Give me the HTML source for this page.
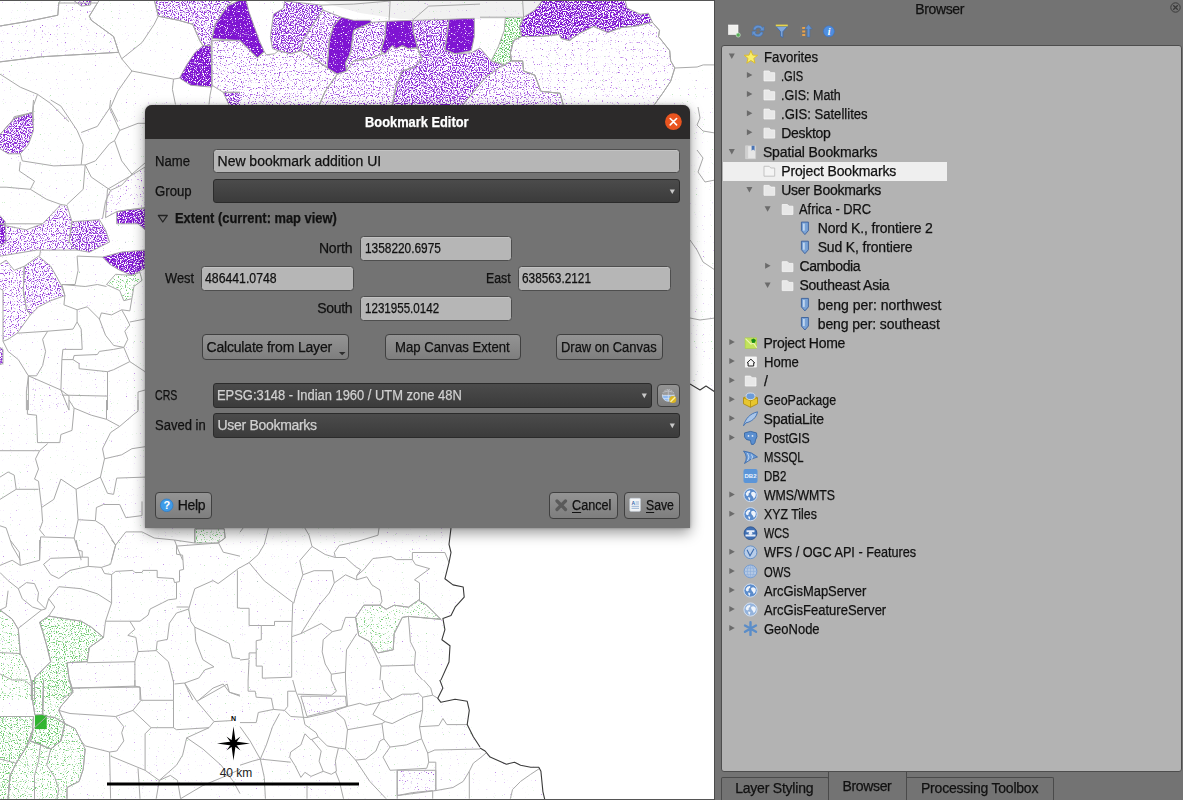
<!DOCTYPE html>
<html><head><meta charset="utf-8"><title>Bookmark Editor</title><style>
html,body{margin:0;padding:0}
body{width:1183px;height:800px;overflow:hidden;position:relative;background:#737373;font-family:"Liberation Sans", sans-serif;font-size:14px}
.t{position:absolute;white-space:nowrap;line-height:20px;height:20px;-webkit-text-stroke:0.25px currentColor}
.abs{position:absolute;box-sizing:border-box}
.inp{position:absolute;box-sizing:border-box;background:#b6b6b6;border:1px solid #4e4e4e;border-radius:3.5px;box-shadow:inset 0 1px 0 rgba(255,255,255,.18)}
.cmb{position:absolute;box-sizing:border-box;background:linear-gradient(#4b4b4b,#3b3b3b);border:1px solid #2b2b2b;border-radius:3px}
.btn{position:absolute;box-sizing:border-box;background:linear-gradient(#949494,#7e7e7e);border:1px solid #404040;border-radius:4px}
u{text-decoration:underline;text-underline-offset:2px}
</style></head><body>
<svg id="map" width="715" height="800" viewBox="0 0 715 800" style="position:absolute;left:0;top:0">
<defs>
<filter id="fp85" x="0" y="0" width="1" height="1" color-interpolation-filters="sRGB"><feTurbulence type="fractalNoise" baseFrequency="0.87" numOctaves="1" seed="1"/><feColorMatrix values="0 0 0 0 0.498 0 0 0 0 0.078 0 0 0 0 0.824 8 0 0 0 -2.810"/><feComposite in2="SourceGraphic" operator="in"/><feGaussianBlur stdDeviation="0.4"/></filter>
<filter id="fp90" x="0" y="0" width="1" height="1" color-interpolation-filters="sRGB"><feTurbulence type="fractalNoise" baseFrequency="0.87" numOctaves="1" seed="2"/><feColorMatrix values="0 0 0 0 0.498 0 0 0 0 0.078 0 0 0 0 0.824 8 0 0 0 -2.327"/><feComposite in2="SourceGraphic" operator="in"/><feGaussianBlur stdDeviation="0.4"/></filter>
<filter id="fp40" x="0" y="0" width="1" height="1" color-interpolation-filters="sRGB"><feTurbulence type="fractalNoise" baseFrequency="0.87" numOctaves="1" seed="3"/><feColorMatrix values="0 0 0 0 0.498 0 0 0 0 0.078 0 0 0 0 0.824 8 0 0 0 -3.969"/><feComposite in2="SourceGraphic" operator="in"/><feGaussianBlur stdDeviation="0.4"/></filter>
<filter id="fp4" x="0" y="0" width="1" height="1" color-interpolation-filters="sRGB"><feTurbulence type="fractalNoise" baseFrequency="0.87" numOctaves="1" seed="4"/><feColorMatrix values="0 0 0 0 0.498 0 0 0 0 0.078 0 0 0 0 0.824 8 0 0 0 -5.448"/><feComposite in2="SourceGraphic" operator="in"/><feGaussianBlur stdDeviation="0.4"/></filter>
<filter id="fp22" x="0" y="0" width="1" height="1" color-interpolation-filters="sRGB"><feTurbulence type="fractalNoise" baseFrequency="0.87" numOctaves="1" seed="5"/><feColorMatrix values="0 0 0 0 0.498 0 0 0 0 0.078 0 0 0 0 0.824 8 0 0 0 -4.591"/><feComposite in2="SourceGraphic" operator="in"/><feGaussianBlur stdDeviation="0.4"/></filter>
<filter id="fp55" x="0" y="0" width="1" height="1" color-interpolation-filters="sRGB"><feTurbulence type="fractalNoise" baseFrequency="0.87" numOctaves="1" seed="6"/><feColorMatrix values="0 0 0 0 0.498 0 0 0 0 0.078 0 0 0 0 0.824 8 0 0 0 -3.614"/><feComposite in2="SourceGraphic" operator="in"/><feGaussianBlur stdDeviation="0.4"/></filter>
<filter id="fp95" x="0" y="0" width="1" height="1" color-interpolation-filters="sRGB"><feTurbulence type="fractalNoise" baseFrequency="0.87" numOctaves="1" seed="7"/><feColorMatrix values="0 0 0 0 0.498 0 0 0 0 0.078 0 0 0 0 0.824 8 0 0 0 -2.145"/><feComposite in2="SourceGraphic" operator="in"/><feGaussianBlur stdDeviation="0.4"/></filter>
<filter id="fp28" x="0" y="0" width="1" height="1" color-interpolation-filters="sRGB"><feTurbulence type="fractalNoise" baseFrequency="0.87" numOctaves="1" seed="8"/><feColorMatrix values="0 0 0 0 0.498 0 0 0 0 0.078 0 0 0 0 0.824 8 0 0 0 -4.310"/><feComposite in2="SourceGraphic" operator="in"/><feGaussianBlur stdDeviation="0.4"/></filter>
<filter id="fp70" x="0" y="0" width="1" height="1" color-interpolation-filters="sRGB"><feTurbulence type="fractalNoise" baseFrequency="0.87" numOctaves="1" seed="9"/><feColorMatrix values="0 0 0 0 0.498 0 0 0 0 0.078 0 0 0 0 0.824 8 0 0 0 -3.355"/><feComposite in2="SourceGraphic" operator="in"/><feGaussianBlur stdDeviation="0.4"/></filter>
<filter id="fg40" x="0" y="0" width="1" height="1" color-interpolation-filters="sRGB"><feTurbulence type="fractalNoise" baseFrequency="0.87" numOctaves="1" seed="10"/><feColorMatrix values="0 0 0 0 0.235 0 0 0 0 0.725 0 0 0 0 0.235 8 0 0 0 -3.969"/><feComposite in2="SourceGraphic" operator="in"/><feGaussianBlur stdDeviation="0.4"/></filter>
<filter id="fp6" x="0" y="0" width="1" height="1" color-interpolation-filters="sRGB"><feTurbulence type="fractalNoise" baseFrequency="0.87" numOctaves="1" seed="11"/><feColorMatrix values="0 0 0 0 0.498 0 0 0 0 0.078 0 0 0 0 0.824 8 0 0 0 -5.183"/><feComposite in2="SourceGraphic" operator="in"/><feGaussianBlur stdDeviation="0.4"/></filter>
<filter id="fp35" x="0" y="0" width="1" height="1" color-interpolation-filters="sRGB"><feTurbulence type="fractalNoise" baseFrequency="0.87" numOctaves="1" seed="12"/><feColorMatrix values="0 0 0 0 0.498 0 0 0 0 0.078 0 0 0 0 0.824 8 0 0 0 -4.118"/><feComposite in2="SourceGraphic" operator="in"/><feGaussianBlur stdDeviation="0.4"/></filter>
<filter id="fp47" x="0" y="0" width="1" height="1" color-interpolation-filters="sRGB"><feTurbulence type="fractalNoise" baseFrequency="0.87" numOctaves="1" seed="13"/><feColorMatrix values="0 0 0 0 0.498 0 0 0 0 0.078 0 0 0 0 0.824 8 0 0 0 -3.685"/><feComposite in2="SourceGraphic" operator="in"/><feGaussianBlur stdDeviation="0.4"/></filter>
<filter id="fp80" x="0" y="0" width="1" height="1" color-interpolation-filters="sRGB"><feTurbulence type="fractalNoise" baseFrequency="0.87" numOctaves="1" seed="14"/><feColorMatrix values="0 0 0 0 0.498 0 0 0 0 0.078 0 0 0 0 0.824 8 0 0 0 -3.114"/><feComposite in2="SourceGraphic" operator="in"/><feGaussianBlur stdDeviation="0.4"/></filter>
<filter id="fp25" x="0" y="0" width="1" height="1" color-interpolation-filters="sRGB"><feTurbulence type="fractalNoise" baseFrequency="0.87" numOctaves="1" seed="15"/><feColorMatrix values="0 0 0 0 0.498 0 0 0 0 0.078 0 0 0 0 0.824 8 0 0 0 -4.409"/><feComposite in2="SourceGraphic" operator="in"/><feGaussianBlur stdDeviation="0.4"/></filter>
<filter id="fg20" x="0" y="0" width="1" height="1" color-interpolation-filters="sRGB"><feTurbulence type="fractalNoise" baseFrequency="0.87" numOctaves="1" seed="16"/><feColorMatrix values="0 0 0 0 0.235 0 0 0 0 0.725 0 0 0 0 0.235 8 0 0 0 -4.591"/><feComposite in2="SourceGraphic" operator="in"/><feGaussianBlur stdDeviation="0.4"/></filter>
<filter id="fg28" x="0" y="0" width="1" height="1" color-interpolation-filters="sRGB"><feTurbulence type="fractalNoise" baseFrequency="0.87" numOctaves="1" seed="17"/><feColorMatrix values="0 0 0 0 0.235 0 0 0 0 0.725 0 0 0 0 0.235 8 0 0 0 -4.278"/><feComposite in2="SourceGraphic" operator="in"/><feGaussianBlur stdDeviation="0.4"/></filter>
<filter id="fg15" x="0" y="0" width="1" height="1" color-interpolation-filters="sRGB"><feTurbulence type="fractalNoise" baseFrequency="0.87" numOctaves="1" seed="18"/><feColorMatrix values="0 0 0 0 0.235 0 0 0 0 0.725 0 0 0 0 0.235 8 0 0 0 -4.773"/><feComposite in2="SourceGraphic" operator="in"/><feGaussianBlur stdDeviation="0.4"/></filter>
<filter id="fg35" x="0" y="0" width="1" height="1" color-interpolation-filters="sRGB"><feTurbulence type="fractalNoise" baseFrequency="0.87" numOctaves="1" seed="19"/><feColorMatrix values="0 0 0 0 0.235 0 0 0 0 0.725 0 0 0 0 0.235 8 0 0 0 -4.118"/><feComposite in2="SourceGraphic" operator="in"/><feGaussianBlur stdDeviation="0.4"/></filter>
<filter id="fp8" x="0" y="0" width="1" height="1" color-interpolation-filters="sRGB"><feTurbulence type="fractalNoise" baseFrequency="0.87" numOctaves="1" seed="20"/><feColorMatrix values="0 0 0 0 0.498 0 0 0 0 0.078 0 0 0 0 0.824 8 0 0 0 -5.096"/><feComposite in2="SourceGraphic" operator="in"/><feGaussianBlur stdDeviation="0.4"/></filter>
<filter id="fp1" x="0" y="0" width="1" height="1" color-interpolation-filters="sRGB"><feTurbulence type="fractalNoise" baseFrequency="0.87" numOctaves="1" seed="21"/><feColorMatrix values="0 0 0 0 0.498 0 0 0 0 0.078 0 0 0 0 0.824 8 0 0 0 -5.667"/><feComposite in2="SourceGraphic" operator="in"/><feGaussianBlur stdDeviation="0.4"/></filter>
<filter id="fg1" x="0" y="0" width="1" height="1" color-interpolation-filters="sRGB"><feTurbulence type="fractalNoise" baseFrequency="0.87" numOctaves="1" seed="22"/><feColorMatrix values="0 0 0 0 0.235 0 0 0 0 0.725 0 0 0 0 0.235 8 0 0 0 -5.800"/><feComposite in2="SourceGraphic" operator="in"/><feGaussianBlur stdDeviation="0.4"/></filter>
</defs>
<rect width="715" height="800" fill="#fff"/>
<path d="M321 0 L335 6 L360 13 L400 19 L520 19 L535 10 L545 0 Z" fill="#f1f1f1"/>
<path d="M202.9 45.6 211.0 45.6 212.0 87.2 190.7 85.2 179.5 78.1 186.7 64.9 194.8 52.7Z" fill="#7f14d2" filter="url(#fp85)" opacity="1"/>
<path d="M240.0 0.0 227.2 6.1 215.1 24.3 212.0 38.5 240.0 40.6Z M240.0 0.0 246.1 0.0 249.1 12.2 259.3 40.6 264.3 51.7 257.2 57.8 252.2 52.7 240.0 40.6Z" fill="#7f14d2" filter="url(#fp90)" opacity="1"/>
<path d="M158.2 16.2 178.5 20.3 192.7 24.3 199.8 40.6 202.9 45.6 211.0 45.6 212.0 38.5 215.1 24.3 227.2 6.1 233.3 0.0 154.2 0.0Z M73.0 0.0 91.3 0.0 90.3 5.1 81.2 6.1Z M14.2 116.7 32.5 112.6 33.5 121.7 12.2 121.7Z M323.2 10.1 341.4 17.2 333.3 26.4 329.3 40.6 327.2 67.0 317.1 60.9 300.9 50.7 302.9 40.6 313.0 24.3Z M371.9 22.3 386.1 21.3 385.1 36.5 381.0 50.7 382.0 53.8 369.8 58.8 353.6 60.9 346.5 71.0 345.5 62.9 350.6 52.7 353.6 30.4Z" fill="#7f14d2" filter="url(#fp40)" opacity="0.85"/>
<path d="M0.0 26.0 28.4 21.3 57.8 15.2 58.8 3.0 97.4 3.0 89.3 16.2 91.3 20.3 113.6 36.5 118.7 52.3 40.6 56.8 0.0 61.9Z M28.4 375.8 60.9 390.0 69.0 410.1 28.4 410.1Z M300.9 696.2 345.5 696.2 346.5 706.4 307.0 716.5Z" fill="#7f14d2" filter="url(#fp4)" opacity="0.7"/>
<path d="M212.0 40.6 240.0 40.6 240.0 92.3 223.2 92.3 212.0 85.2Z M240.0 40.6 252.2 52.7 257.2 57.8 264.3 51.7 266.4 54.8 274.5 53.8 278.5 50.7 290.7 53.8 300.9 50.7 317.1 60.9 327.2 68.0 337.4 74.1 325.2 91.3 319.1 105.5 240.0 105.5Z" fill="#7f14d2" filter="url(#fp22)" opacity="0.72"/>
<path d="M223.2 92.3 240.0 92.3 240.0 105.5 229.3 105.5Z M284.6 1.0 321.2 5.1 323.2 10.1 313.0 24.3 302.9 40.6 300.9 50.7 290.7 53.8 278.5 50.7 272.5 48.7 270.4 36.5 273.5 14.2 283.6 8.1Z M14.2 118.3 32.5 112.2 33.5 130.4 28.4 144.6 20.3 153.8 8.1 153.8 0.0 148.7 0.0 134.5Z" fill="#7f14d2" filter="url(#fp55)" opacity="0.9"/>
<path d="M341.4 17.2 353.6 20.3 369.8 20.3 371.9 22.3 353.6 30.4 350.6 52.7 345.5 62.9 346.5 71.0 337.4 74.1 327.2 68.0 329.3 40.6 333.3 26.4Z M386.1 21.3 412.4 20.3 413.5 32.5 417.5 47.7 408.4 48.7 402.3 45.6 396.2 48.7 392.2 45.6 385.1 53.8 381.0 50.7 385.1 36.5Z M449.0 19.3 474.3 18.3 474.3 36.5 471.3 50.7 455.1 53.8 444.9 49.7 446.9 36.5Z" fill="#7f14d2" filter="url(#fp95)" opacity="1"/>
<path d="M337.4 74.1 346.5 71.0 353.6 60.9 369.8 58.8 382.0 53.8 385.1 53.8 392.2 45.6 396.2 48.7 402.3 45.6 408.4 48.7 417.5 47.7 421.6 58.8 414.5 67.0 402.3 71.0 396.2 85.2 392.2 105.5 319.1 105.5 325.2 91.3Z M501.5 66.1 504.3 64.9 511.4 60.9 522.6 60.9 523.6 71.0 534.8 75.1 540.9 91.3 560.1 93.3 563.2 105.5 462.0 105.5 464.8 102.5 476.0 89.0 485.0 77.8Z" fill="#7f14d2" filter="url(#fp28)" opacity="0.75"/>
<path d="M542.9 0.0 625.1 0.0 627.1 8.1 640.3 14.2 648.4 13.2 652.4 22.3 634.2 26.4 622.0 27.4 607.8 32.5 593.6 26.4 579.4 33.5 569.3 40.6 561.2 38.5 559.1 34.5 540.9 36.5 521.6 36.5 519.6 26.4 523.6 17.2 534.8 10.1Z M0.0 215.6 5.1 221.7 6.1 242.0 0.0 246.1Z" fill="#7f14d2" filter="url(#fp70)" opacity="1"/>
<path d="M505.4 17.2 523.6 17.2 519.6 26.4 521.6 36.5 513.5 40.6 510.4 52.7 511.4 60.9 504.3 64.9 491.2 60.9 498.3 46.7 504.3 30.4Z" fill="#3cb93c" filter="url(#fg40)" opacity="0.85"/>
<path d="M521.6 36.5 540.9 36.5 559.1 34.5 561.2 38.5 569.3 40.6 579.4 33.5 593.6 26.4 607.8 32.5 622.0 27.4 634.2 26.4 652.4 22.3 659.5 30.4 658.5 36.5 669.7 50.7 670.7 60.9 674.8 68.0 670.7 81.2 662.6 93.3 654.5 104.5 563.2 104.5 560.1 93.3 540.9 91.3 534.8 75.1 523.6 71.0 522.6 60.9 511.4 60.9 510.4 52.7 513.5 40.6Z M107.5 189.3 131.9 175.1 145.1 167.0 145.1 207.5 129.8 209.6 116.7 211.6 105.5 217.7Z" fill="#7f14d2" filter="url(#fp6)" opacity="0.7"/>
<path d="M0.0 223.8 6.1 225.8 26.4 229.8 42.6 223.8 60.9 204.5 67.0 205.5 72.0 221.7 69.0 242.0 77.1 250.1 36.5 250.1 0.0 256.2Z M24.3 266.2 38.5 256.1 50.7 266.2 60.9 284.5 64.9 295.6 50.7 300.7 38.5 306.8 30.4 314.9 26.4 308.8 23.3 290.6Z" fill="#7f14d2" filter="url(#fp35)" opacity="0.8"/>
<path d="M72.0 221.7 99.4 219.7 105.5 229.8 109.6 242.0 89.3 252.2 77.1 250.1 69.0 242.0Z M0.0 347.4 3.0 349.4 3.0 363.6 0.0 364.6Z M412.4 20.3 449.0 19.3 446.9 36.5 444.9 49.7 455.1 53.8 471.3 52.7 480.0 48.0 491.2 60.9 504.3 64.9 501.5 66.1 485.0 77.8 476.0 89.0 464.8 102.5 462.0 105.5 392.2 105.5 396.2 85.2 402.3 71.0 414.5 67.0 421.6 58.8 417.5 47.7 413.5 32.5Z" fill="#7f14d2" filter="url(#fp47)" opacity="0.9"/>
<path d="M116.7 211.6 129.8 209.6 145.1 208.5 145.1 229.8 138.0 223.8 116.7 223.8Z M102.5 257.1 121.7 252.0 145.1 250.0 145.1 268.3 131.9 275.4 119.7 270.3 109.6 264.2Z" fill="#7f14d2" filter="url(#fp80)" opacity="1"/>
<path d="M0.0 264.2 6.1 260.1 14.2 270.3 24.3 266.2 23.3 290.6 26.4 308.8 30.4 314.9 17.2 333.2 8.1 339.3 3.0 341.3 3.0 290.6 0.0 288.5Z" fill="#7f14d2" filter="url(#fp25)" opacity="0.75"/>
<path d="M106.5 284.5 115.6 274.3 131.9 275.4 140.0 272.3 142.0 280.4 133.9 286.5 131.9 298.7 123.8 300.7 119.7 290.6Z M194.8 528.8 224.2 528.8 225.2 538.0 218.1 543.0 194.8 543.0Z M16.2 763.2 26.4 747.0 30.4 740.9 40.6 744.9 50.7 749.0 60.9 740.9 64.9 723.6 75.1 728.7 81.2 740.9 85.2 749.0 83.2 769.3 79.1 781.4 67.0 787.5 67.0 798.7 8.1 798.7 10.1 775.4Z" fill="#3cb93c" filter="url(#fg20)" opacity="0.7"/>
<path d="M39.6 622.2 48.7 616.1 81.2 621.2 91.3 627.2 103.5 637.4 89.3 647.5 87.2 661.7 67.0 662.7 69.0 678.0 73.0 691.1 60.9 700.1 34.5 700.1 34.5 678.0 50.7 661.7 46.7 645.5 42.6 631.3Z M0.0 716.5 33.5 716.5 32.5 730.7 26.4 747.0 16.2 763.2 10.1 775.4 8.1 798.7 0.0 798.7Z M32.5 680.0 43.6 680.0 42.6 714.5 34.9 714.9 32.5 700.3Z" fill="#3cb93c" filter="url(#fg28)" opacity="0.75"/>
<path d="M0.0 610.0 12.2 619.1 18.3 629.3 20.3 653.6 28.4 669.8 31.4 682.0 31.4 700.1 0.0 700.1Z M43.6 680.0 69.0 680.0 73.0 692.2 60.9 706.4 58.8 710.4 64.9 723.6 54.8 717.5 46.7 716.5 42.6 714.5Z M363.8 605.2 380.0 605.2 386.1 609.3 394.2 605.2 408.4 607.2 418.5 600.1 426.7 605.2 440.9 619.4 408.4 616.4 402.3 617.4 394.2 633.6 393.2 649.8 378.0 652.9 369.8 641.7 358.7 635.6 355.6 617.4Z" fill="#3cb93c" filter="url(#fg15)" opacity="0.7"/>
<path d="M34.9 714.9 46.7 714.9 46.7 729.1 34.9 729.1Z" fill="#2fb52f"/>
<path d="M46.7 716.5 54.8 717.5 64.9 723.6 60.9 740.9 50.7 749.0 40.6 744.9 30.4 740.9 33.5 728.7Z" fill="#3cb93c" filter="url(#fg35)" opacity="0.8"/>
<path d="M397.2 770.3 435.8 770.3 435.8 790.6 397.2 795.6Z" fill="#7f14d2" filter="url(#fp8)" opacity="0.7"/>
<path d="M0.0 0.0 625.0 0.0 627.0 8.0 640.0 14.0 648.0 13.0 652.0 22.0 660.0 30.0 658.0 37.0 670.0 51.0 671.0 61.0 675.0 68.0 715.0 65.0 715.0 392.0 690.0 386.0 690.0 105.0 145.0 105.0 145.0 528.0 450.0 528.0 452.0 560.0 445.0 580.0 465.0 600.0 450.0 620.0 445.0 660.0 452.0 680.0 440.0 700.0 470.0 710.0 480.0 748.0 540.0 768.0 545.0 800.0 0.0 800.0Z" fill="#7f14d2" filter="url(#fp1)" opacity="0.5"/>
<path d="M0.0 0.0 625.0 0.0 627.0 8.0 640.0 14.0 648.0 13.0 652.0 22.0 660.0 30.0 658.0 37.0 670.0 51.0 671.0 61.0 675.0 68.0 715.0 65.0 715.0 392.0 690.0 386.0 690.0 105.0 145.0 105.0 145.0 528.0 450.0 528.0 452.0 560.0 445.0 580.0 465.0 600.0 450.0 620.0 445.0 660.0 452.0 680.0 440.0 700.0 470.0 710.0 480.0 748.0 540.0 768.0 545.0 800.0 0.0 800.0Z" fill="#3cb93c" filter="url(#fg1)" opacity="0.45"/>
<path d="M0.0 26.0 28.4 21.3 57.8 15.2 58.8 3.0 60.9 0.0 M0.0 61.9 40.6 56.8 118.7 52.3 M118.7 52.3 113.6 36.5 91.3 20.3 89.3 16.2 97.4 3.0 99.4 0.0 M118.7 52.3 121.7 58.8 131.9 71.0 173.5 79.1 179.5 78.1 M121.7 58.8 142.0 42.6 154.2 24.3 158.2 16.2 156.2 6.1 154.2 0.0 M131.9 71.0 117.7 91.3 110.6 107.5 117.7 121.7 M0.0 74.1 20.3 87.2 37.5 94.3 50.7 103.5 69.0 121.7 M37.5 94.3 33.5 105.5 32.5 121.7 M173.5 79.1 172.4 89.3 175.5 104.5 M158.2 16.2 178.5 20.3 192.7 24.3 199.8 40.6 202.9 45.6 M212.0 85.2 210.0 95.4 209.0 104.5 M33.5 100.0 32.5 112.2 14.2 118.3 0.0 134.5 M50.7 100.0 60.9 106.1 77.1 130.4 83.2 144.6 81.2 164.9 M20.3 153.8 22.3 160.9 53.8 165.9 81.2 164.9 85.2 164.9 M110.6 100.0 109.6 108.1 101.4 120.3 97.4 126.4 81.2 132.5 M109.6 108.1 119.7 130.4 114.6 140.6 109.6 143.6 95.4 160.9 85.2 164.9 M119.7 130.4 138.0 123.3 145.1 123.3 M114.6 140.6 121.7 160.9 131.9 174.1 145.1 162.9 M85.2 164.9 91.3 177.1 110.6 190.3 121.7 185.2 131.9 174.1 M110.6 190.3 105.5 201.4 102.5 218.7 M85.2 164.9 83.2 189.3 67.0 204.5 M20.3 161.9 19.3 171.0 34.5 181.2 30.4 189.3 46.7 199.4 60.9 204.5 M0.0 187.2 6.1 187.2 30.4 189.3 M0.0 223.8 42.6 223.8 M40.6 250.0 39.6 256.1 M77.1 256.1 78.1 270.3 75.1 284.5 61.9 284.5 M77.1 256.1 102.5 257.1 M61.9 284.5 85.2 286.5 97.4 284.5 106.5 286.5 M61.9 284.5 64.9 295.6 63.9 304.8 77.1 309.8 77.1 322.0 73.0 329.1 47.7 331.2 17.2 333.2 M77.1 309.8 87.2 306.8 99.4 319.0 101.4 312.9 111.6 314.9 121.7 309.8 129.8 310.9 131.9 298.7 M99.4 319.0 105.5 335.2 113.6 345.4 123.8 347.4 127.8 339.3 124.8 331.2 129.8 325.1 125.8 317.0 121.7 309.8 M129.8 322.0 145.1 319.0 M77.1 322.0 81.2 329.1 82.2 349.4 62.9 349.4 61.9 359.6 60.9 390.0 M47.7 331.2 42.6 339.3 45.6 351.4 42.6 365.6 36.5 375.8 28.4 375.8 M3.0 341.3 8.1 351.4 18.3 359.6 28.4 375.8 26.4 392.0 26.4 410.1 M61.9 359.6 73.0 359.6 74.1 355.5 97.4 354.5 99.4 351.4 113.6 349.4 123.8 347.4 M73.0 359.6 79.1 363.6 79.1 368.7 107.5 371.7 107.5 396.1 61.9 395.1 M107.5 371.7 113.6 369.7 129.8 361.6 123.8 347.4 M129.8 361.6 145.1 371.7 M107.5 396.1 107.5 410.1 M60.9 390.0 69.0 396.1 69.0 410.1 M138.0 410.1 138.0 392.0 145.1 390.0 M27.4 400.0 27.4 414.2 36.5 415.2 37.5 442.6 59.8 442.6 60.9 434.5 72.0 430.4 74.1 408.1 69.0 400.0 M74.1 408.1 91.3 415.2 106.5 419.3 119.7 426.4 133.9 414.2 138.0 411.2 138.0 400.0 M106.5 400.0 106.5 419.3 M119.7 426.4 110.6 432.5 102.5 448.7 104.5 458.8 100.4 477.1 76.1 489.3 60.9 479.1 53.8 499.4 41.6 507.5 38.5 481.2 34.5 479.1 38.5 469.0 35.5 458.8 39.6 450.7 47.7 443.6 M0.0 450.7 39.6 450.7 M104.5 458.8 121.7 454.8 131.9 448.7 145.1 446.7 M100.4 477.1 107.5 493.3 113.6 494.3 116.7 478.1 145.1 477.1 M76.1 489.3 78.1 519.7 74.1 538.0 40.6 536.9 39.6 560.1 M78.1 519.7 95.4 520.7 96.4 507.5 103.5 504.5 119.7 504.5 125.8 517.7 142.0 515.6 142.0 501.4 M95.4 520.7 103.5 525.8 115.6 545.1 111.6 560.1 M115.6 545.1 125.8 531.9 142.0 531.9 154.2 538.0 174.5 540.0 194.8 543.0 194.8 529.8 M0.0 499.4 16.2 489.3 14.2 475.1 8.1 472.0 0.0 477.1 M16.2 489.3 38.5 489.3 M41.6 507.5 42.6 521.7 39.6 529.8 44.6 535.9 M0.0 525.8 6.1 527.8 12.2 546.1 20.3 560.1 M74.1 538.0 79.1 552.2 81.2 560.1 M174.5 540.0 177.5 548.1 182.6 560.1 M218.1 542.0 223.2 552.2 240.0 556.2 M194.8 528.8 224.2 528.8 225.2 538.0 218.1 543.0 M0.0 565.4 12.2 560.3 20.3 565.4 39.6 560.3 39.6 540.0 M10.1 540.0 19.3 552.2 20.3 565.4 M76.1 540.0 78.1 550.1 82.2 551.2 82.2 557.2 88.3 557.2 88.3 566.4 70.0 570.4 58.8 578.5 50.7 574.5 43.6 564.3 50.7 558.3 82.2 557.2 M111.6 540.0 115.6 545.1 110.6 564.3 101.4 567.4 88.3 566.4 M101.4 567.4 104.5 573.5 111.6 574.5 115.6 571.4 132.9 570.4 134.9 572.5 142.0 572.5 143.0 570.4 157.2 570.4 157.2 577.5 173.5 578.5 174.5 582.6 179.5 581.6 179.5 570.4 183.6 569.4 182.6 555.2 176.5 554.2 176.5 546.1 218.1 543.0 219.1 540.0 M111.6 574.5 111.6 602.9 105.5 621.2 103.5 637.4 M48.7 598.8 58.8 586.7 81.2 588.7 97.4 593.8 111.6 602.9 M48.7 598.8 54.8 607.0 50.7 613.0 48.7 616.1 M105.5 621.2 129.8 621.2 140.0 621.2 148.1 615.1 150.1 609.0 162.3 602.9 168.4 599.8 176.5 598.8 176.5 582.6 M129.8 621.2 134.9 629.3 127.8 635.4 135.9 637.4 138.0 651.6 134.9 661.7 87.2 662.7 M138.0 651.6 156.2 650.6 168.4 661.7 173.5 682.0 173.5 700.1 M156.2 650.6 157.2 641.4 167.4 639.4 169.4 623.2 176.5 613.0 188.7 609.0 191.7 598.8 194.8 588.7 213.0 580.6 218.1 583.6 240.0 567.4 M176.5 607.0 188.7 607.0 M188.7 609.0 190.7 621.2 194.8 627.2 217.1 637.4 229.3 643.5 232.3 657.7 240.0 658.7 M194.8 627.2 195.8 641.4 202.9 659.7 214.0 666.8 204.9 669.8 198.8 678.0 184.6 683.0 174.5 684.0 M184.6 683.0 192.7 700.1 M134.9 661.7 134.9 686.1 140.0 687.1 140.0 700.1 M73.0 688.1 134.9 686.1 M240.0 696.2 229.3 692.2 223.2 684.0 213.0 688.1 198.8 700.1 M237.4 570.4 237.4 608.0 240.0 608.0 M0.0 572.5 8.1 580.6 18.3 588.7 26.4 582.6 34.5 583.6 38.5 592.7 37.5 600.9 45.6 609.0 41.6 610.0 18.3 628.3 M8.1 590.7 6.1 607.0 0.0 610.0 M18.3 588.7 22.3 598.8 32.5 607.0 41.6 610.0 M45.6 609.0 48.7 598.8 M0.0 652.6 20.3 653.6 M0.0 673.9 12.2 680.0 24.3 680.0 31.4 686.1 M39.6 622.2 48.7 616.1 81.2 621.2 91.3 627.2 103.5 637.4 89.3 647.5 87.2 661.7 67.0 662.7 69.0 678.0 73.0 691.1 M0.0 610.0 12.2 619.1 18.3 629.3 20.3 653.6 28.4 669.8 31.4 682.0 31.4 700.1 M39.6 622.2 42.6 631.3 46.7 645.5 50.7 661.7 34.5 678.0 34.5 700.1 M70.0 688.1 140.0 687.1 141.0 700.3 132.9 710.4 115.6 716.5 70.0 713.5 58.8 710.4 M134.9 680.0 134.9 687.1 M141.0 700.3 173.5 700.3 173.5 680.0 M132.9 710.4 151.1 727.7 145.1 733.8 145.1 770.3 159.3 780.4 176.5 765.2 182.6 755.1 186.7 737.8 209.0 727.7 214.0 721.6 231.3 720.6 M173.5 700.3 173.5 727.7 176.5 729.7 209.0 727.7 M151.1 727.7 173.5 727.7 M115.6 716.5 123.8 726.7 121.7 732.7 123.8 740.9 116.7 751.0 109.6 752.0 110.6 798.7 M109.6 752.0 85.2 745.9 81.2 740.9 75.1 728.7 64.9 723.6 M110.6 756.1 145.1 770.3 M138.0 768.3 140.0 798.7 M159.3 780.4 156.2 798.7 M159.3 780.4 170.4 775.4 177.5 780.4 180.6 798.7 M186.7 737.8 202.9 749.0 221.1 765.2 233.3 781.4 240.0 793.6 M180.6 798.7 202.9 785.5 227.2 775.4 240.0 769.3 M184.6 683.0 196.8 701.3 214.0 721.6 M196.8 701.3 227.2 684.1 229.3 692.2 240.0 695.2 M70.0 688.1 73.0 692.2 60.9 706.4 58.8 710.4 64.9 723.6 M0.0 716.5 33.5 716.5 32.5 730.7 26.4 747.0 16.2 763.2 10.1 775.4 8.1 798.7 M32.5 680.0 32.5 700.3 34.9 714.9 M43.6 680.0 42.6 714.5 M30.4 740.9 40.6 744.9 50.7 749.0 60.9 740.9 64.9 723.6 M85.2 749.0 83.2 769.3 79.1 781.4 67.0 787.5 67.0 798.7 M40.6 744.9 38.5 761.2 34.5 775.4 34.5 798.7 M50.7 749.0 46.7 765.2 54.8 777.4 58.8 789.6 56.8 798.7 M0.0 759.1 16.2 763.2 M240.0 532.2 243.0 528.1 M268.4 528.1 264.3 544.3 258.3 554.5 249.1 562.6 240.0 567.7 M249.1 562.6 264.3 580.9 293.8 603.2 296.8 591.0 302.9 574.8 299.8 560.6 312.0 546.4 309.0 535.2 304.9 528.1 M312.0 546.4 325.2 554.5 335.4 557.5 334.3 552.5 339.4 545.4 357.7 541.3 378.0 535.2 379.0 528.1 M335.4 557.5 345.5 557.5 355.6 566.7 360.7 569.7 356.7 575.8 M302.9 574.8 314.1 570.7 332.3 570.7 334.3 582.9 345.5 574.8 356.7 579.8 356.7 575.8 363.8 569.7 372.9 558.5 391.1 556.5 396.2 559.6 412.4 559.6 412.4 552.5 444.9 552.5 449.0 562.6 M412.4 559.6 415.5 564.6 429.7 568.7 414.5 579.8 419.5 582.9 419.5 600.1 M356.7 579.8 366.8 576.8 371.9 584.9 380.0 590.0 382.0 601.2 380.0 605.2 M334.3 582.9 329.3 593.0 319.1 605.2 311.0 617.4 300.9 633.6 291.7 636.7 292.7 603.2 M300.9 633.6 321.2 623.5 332.3 631.6 341.4 629.6 345.5 617.4 355.6 617.4 M332.3 631.6 323.2 639.7 322.2 651.9 325.2 664.0 331.3 674.2 345.5 672.2 346.5 649.8 356.7 633.6 M331.3 674.2 331.3 680.1 M345.5 672.2 345.5 680.1 M240.0 608.3 249.1 608.3 249.1 625.5 261.3 625.5 261.3 639.7 256.2 640.7 256.2 666.1 262.3 666.1 262.3 678.2 291.7 677.2 291.7 636.7 M261.3 625.5 274.5 625.5 274.5 621.4 291.7 621.4 M240.0 660.0 249.1 659.0 249.1 652.9 256.2 652.9 M249.1 660.0 248.1 680.1 M369.8 641.7 381.0 666.1 414.5 665.1 415.5 651.9 410.4 641.7 408.4 616.4 M381.0 666.1 380.0 680.1 M414.5 665.1 415.5 672.2 422.6 680.1 M363.8 605.2 380.0 605.2 386.1 609.3 394.2 605.2 408.4 607.2 418.5 600.1 426.7 605.2 440.9 619.4 408.4 616.4 402.3 617.4 394.2 633.6 393.2 649.8 378.0 652.9 369.8 641.7 358.7 635.6 355.6 617.4 363.8 605.2 M248.1 680.0 248.1 691.2 255.2 691.2 256.2 697.2 271.4 698.3 273.5 709.4 284.6 710.4 287.7 706.4 287.7 691.2 295.8 691.2 292.7 680.0 M295.8 691.2 300.9 704.3 304.9 724.6 316.1 732.7 318.1 736.8 M240.0 722.6 256.2 722.6 258.3 712.5 273.5 709.4 M284.6 710.4 290.7 716.5 307.0 717.5 329.3 712.5 347.5 706.4 359.7 703.3 365.8 705.4 380.0 702.3 392.2 699.3 402.3 694.2 412.4 694.2 418.5 693.2 422.6 697.2 432.7 695.2 437.8 698.3 M297.8 694.2 331.3 695.2 336.4 691.2 331.3 680.0 M345.5 680.0 347.5 706.4 M336.4 712.5 344.5 719.6 347.5 729.7 345.5 749.0 338.4 748.0 327.2 745.9 318.1 736.8 311.0 739.8 304.9 733.8 300.9 744.9 290.7 752.0 289.7 757.1 294.8 765.2 300.9 777.4 304.9 772.3 311.0 776.4 323.2 771.3 319.1 761.2 321.2 751.0 312.0 739.8 M323.2 771.3 331.3 774.3 336.4 771.3 335.4 761.2 338.4 748.0 M347.5 729.7 382.0 723.6 385.1 721.6 392.2 723.6 408.4 715.5 422.6 710.4 422.6 697.2 M372.9 714.5 380.0 702.3 M372.9 714.5 385.1 721.6 M382.0 723.6 384.0 738.8 380.0 740.9 375.9 751.0 365.8 759.1 355.6 760.1 345.5 749.0 M384.0 738.8 390.1 747.0 406.4 744.9 421.6 738.8 419.5 726.7 422.6 710.4 M421.6 738.8 427.7 753.0 428.7 762.2 426.7 768.3 390.1 770.3 383.0 757.1 390.1 747.0 M419.5 726.7 438.8 725.6 442.9 718.5 446.9 724.6 467.2 724.6 M427.7 753.0 434.8 750.0 480.0 749.0 M428.7 762.2 435.8 762.2 435.8 790.6 453.0 787.5 463.2 781.4 469.3 771.3 473.3 763.2 480.0 758.1 M397.2 770.3 397.2 798.7 M397.2 795.6 412.4 792.6 432.7 790.6 432.7 798.7 M355.6 760.1 369.8 781.4 386.1 798.7 M335.4 771.3 339.4 781.4 343.5 798.7 M260.3 759.1 290.7 762.2 M260.3 759.1 264.3 777.4 265.4 798.7 M240.0 726.7 250.1 740.9 260.3 759.1 M279.6 713.5 272.5 726.7 266.4 744.9 260.3 759.1 M240.0 765.2 252.2 761.2 260.3 759.1 M307.0 785.5 307.0 798.7 M382.0 680.0 384.0 690.1 390.1 697.2 392.2 699.3 M423.6 680.0 430.7 688.1 432.7 695.2 M469.3 771.3 469.3 798.7 M480.0 758.1 486.1 753.0 M510.4 798.7 512.5 789.6 520.6 781.4 530.7 774.3 539.8 768.3 M652.4 22.3 659.5 30.4 658.5 36.5 669.7 50.7 670.7 60.9 674.8 68.0 697.1 67.0 703.2 64.9 715.3 64.9 M674.8 68.0 670.7 81.2 662.6 93.3 654.5 104.5 M480.0 17.2 505.4 17.2 M523.6 17.2 522.6 0.0 M521.6 36.5 513.5 40.6 510.4 52.7 511.4 60.9 522.6 60.9 523.6 71.0 534.8 75.1 540.9 91.3 560.1 93.3 563.2 104.5 M337.4 74.1 325.2 91.3 319.1 105.5 M392.2 105.5 396.2 85.2 402.3 71.0 414.5 67.0 421.6 58.8 417.5 47.7 M321.2 5.1 353.6 4.1 390.1 1.0 M390.1 1.0 389.1 20.3 M412.4 20.3 428.7 6.1 480.0 4.1 M698.0 107.0 700.0 118.0 697.0 125.0 703.0 131.0 715.0 133.0 M697.0 150.0 703.0 158.0 698.0 172.0 705.0 182.0 715.0 180.0 M690.0 240.0 697.0 250.0 703.0 262.0 715.0 270.0 M690.0 318.0 700.0 320.0 715.0 318.0 M202.9 45.6 211.0 45.6 M211.0 45.6 212.0 87.2 M212.0 87.2 190.7 85.2 M190.7 85.2 179.5 78.1 M179.5 78.1 186.7 64.9 M186.7 64.9 194.8 52.7 M194.8 52.7 202.9 45.6 M240.0 0.0 227.2 6.1 M227.2 6.1 215.1 24.3 M215.1 24.3 212.0 38.5 M212.0 38.5 240.0 40.6 M158.2 16.2 178.5 20.3 M178.5 20.3 192.7 24.3 M192.7 24.3 199.8 40.6 M199.8 40.6 202.9 45.6 M202.9 45.6 211.0 45.6 M211.0 45.6 212.0 38.5 M212.0 38.5 215.1 24.3 M215.1 24.3 227.2 6.1 M227.2 6.1 233.3 0.0 M154.2 0.0 158.2 16.2 M0.0 26.0 28.4 21.3 M28.4 21.3 57.8 15.2 M57.8 15.2 58.8 3.0 M58.8 3.0 97.4 3.0 M97.4 3.0 89.3 16.2 M89.3 16.2 91.3 20.3 M91.3 20.3 113.6 36.5 M113.6 36.5 118.7 52.3 M118.7 52.3 40.6 56.8 M40.6 56.8 0.0 61.9 M91.3 0.0 90.3 5.1 M90.3 5.1 81.2 6.1 M81.2 6.1 73.0 0.0 M14.2 116.7 32.5 112.6 M32.5 112.6 33.5 121.7 M12.2 121.7 14.2 116.7 M212.0 40.6 240.0 40.6 M240.0 92.3 223.2 92.3 M223.2 92.3 212.0 85.2 M212.0 85.2 212.0 40.6 M223.2 92.3 240.0 92.3 M229.3 105.5 223.2 92.3 M246.1 0.0 249.1 12.2 M249.1 12.2 259.3 40.6 M259.3 40.6 264.3 51.7 M264.3 51.7 257.2 57.8 M257.2 57.8 252.2 52.7 M252.2 52.7 240.0 40.6 M284.6 1.0 321.2 5.1 M321.2 5.1 323.2 10.1 M323.2 10.1 313.0 24.3 M313.0 24.3 302.9 40.6 M302.9 40.6 300.9 50.7 M300.9 50.7 290.7 53.8 M290.7 53.8 278.5 50.7 M278.5 50.7 272.5 48.7 M272.5 48.7 270.4 36.5 M270.4 36.5 273.5 14.2 M273.5 14.2 283.6 8.1 M283.6 8.1 284.6 1.0 M323.2 10.1 341.4 17.2 M341.4 17.2 333.3 26.4 M333.3 26.4 329.3 40.6 M329.3 40.6 327.2 67.0 M327.2 67.0 317.1 60.9 M317.1 60.9 300.9 50.7 M300.9 50.7 302.9 40.6 M302.9 40.6 313.0 24.3 M313.0 24.3 323.2 10.1 M341.4 17.2 353.6 20.3 M353.6 20.3 369.8 20.3 M369.8 20.3 371.9 22.3 M371.9 22.3 353.6 30.4 M353.6 30.4 350.6 52.7 M350.6 52.7 345.5 62.9 M345.5 62.9 346.5 71.0 M346.5 71.0 337.4 74.1 M337.4 74.1 327.2 68.0 M327.2 68.0 329.3 40.6 M329.3 40.6 333.3 26.4 M333.3 26.4 341.4 17.2 M371.9 22.3 386.1 21.3 M386.1 21.3 385.1 36.5 M385.1 36.5 381.0 50.7 M381.0 50.7 382.0 53.8 M382.0 53.8 369.8 58.8 M369.8 58.8 353.6 60.9 M353.6 60.9 346.5 71.0 M346.5 71.0 345.5 62.9 M345.5 62.9 350.6 52.7 M350.6 52.7 353.6 30.4 M353.6 30.4 371.9 22.3 M386.1 21.3 412.4 20.3 M412.4 20.3 413.5 32.5 M413.5 32.5 417.5 47.7 M417.5 47.7 408.4 48.7 M408.4 48.7 402.3 45.6 M402.3 45.6 396.2 48.7 M396.2 48.7 392.2 45.6 M392.2 45.6 385.1 53.8 M385.1 53.8 381.0 50.7 M381.0 50.7 385.1 36.5 M385.1 36.5 386.1 21.3 M449.0 19.3 474.3 18.3 M474.3 18.3 474.3 36.5 M474.3 36.5 471.3 50.7 M471.3 50.7 455.1 53.8 M455.1 53.8 444.9 49.7 M444.9 49.7 446.9 36.5 M446.9 36.5 449.0 19.3 M240.0 40.6 252.2 52.7 M252.2 52.7 257.2 57.8 M257.2 57.8 264.3 51.7 M264.3 51.7 266.4 54.8 M266.4 54.8 274.5 53.8 M274.5 53.8 278.5 50.7 M278.5 50.7 290.7 53.8 M290.7 53.8 300.9 50.7 M300.9 50.7 317.1 60.9 M317.1 60.9 327.2 68.0 M327.2 68.0 337.4 74.1 M337.4 74.1 325.2 91.3 M325.2 91.3 319.1 105.5 M337.4 74.1 346.5 71.0 M346.5 71.0 353.6 60.9 M353.6 60.9 369.8 58.8 M369.8 58.8 382.0 53.8 M382.0 53.8 385.1 53.8 M385.1 53.8 392.2 45.6 M392.2 45.6 396.2 48.7 M396.2 48.7 402.3 45.6 M402.3 45.6 408.4 48.7 M408.4 48.7 417.5 47.7 M417.5 47.7 421.6 58.8 M421.6 58.8 414.5 67.0 M414.5 67.0 402.3 71.0 M402.3 71.0 396.2 85.2 M396.2 85.2 392.2 105.5 M319.1 105.5 325.2 91.3 M325.2 91.3 337.4 74.1 M625.1 0.0 627.1 8.1 M627.1 8.1 640.3 14.2 M640.3 14.2 648.4 13.2 M648.4 13.2 652.4 22.3 M652.4 22.3 634.2 26.4 M634.2 26.4 622.0 27.4 M622.0 27.4 607.8 32.5 M607.8 32.5 593.6 26.4 M593.6 26.4 579.4 33.5 M579.4 33.5 569.3 40.6 M569.3 40.6 561.2 38.5 M561.2 38.5 559.1 34.5 M559.1 34.5 540.9 36.5 M540.9 36.5 521.6 36.5 M521.6 36.5 519.6 26.4 M519.6 26.4 523.6 17.2 M523.6 17.2 534.8 10.1 M534.8 10.1 542.9 0.0 M505.4 17.2 523.6 17.2 M523.6 17.2 519.6 26.4 M519.6 26.4 521.6 36.5 M521.6 36.5 513.5 40.6 M513.5 40.6 510.4 52.7 M510.4 52.7 511.4 60.9 M511.4 60.9 504.3 64.9 M504.3 64.9 491.2 60.9 M491.2 60.9 498.3 46.7 M498.3 46.7 504.3 30.4 M504.3 30.4 505.4 17.2 M521.6 36.5 540.9 36.5 M540.9 36.5 559.1 34.5 M559.1 34.5 561.2 38.5 M561.2 38.5 569.3 40.6 M569.3 40.6 579.4 33.5 M579.4 33.5 593.6 26.4 M593.6 26.4 607.8 32.5 M607.8 32.5 622.0 27.4 M622.0 27.4 634.2 26.4 M634.2 26.4 652.4 22.3 M652.4 22.3 659.5 30.4 M659.5 30.4 658.5 36.5 M658.5 36.5 669.7 50.7 M669.7 50.7 670.7 60.9 M670.7 60.9 674.8 68.0 M674.8 68.0 670.7 81.2 M670.7 81.2 662.6 93.3 M662.6 93.3 654.5 104.5 M563.2 104.5 560.1 93.3 M560.1 93.3 540.9 91.3 M540.9 91.3 534.8 75.1 M534.8 75.1 523.6 71.0 M523.6 71.0 522.6 60.9 M522.6 60.9 511.4 60.9 M511.4 60.9 510.4 52.7 M510.4 52.7 513.5 40.6 M513.5 40.6 521.6 36.5 M14.2 118.3 32.5 112.2 M32.5 112.2 33.5 130.4 M33.5 130.4 28.4 144.6 M28.4 144.6 20.3 153.8 M20.3 153.8 8.1 153.8 M8.1 153.8 0.0 148.7 M0.0 134.5 14.2 118.3 M0.0 223.8 6.1 225.8 M6.1 225.8 26.4 229.8 M26.4 229.8 42.6 223.8 M42.6 223.8 60.9 204.5 M60.9 204.5 67.0 205.5 M67.0 205.5 72.0 221.7 M72.0 221.7 69.0 242.0 M69.0 242.0 77.1 250.1 M77.1 250.1 36.5 250.1 M36.5 250.1 0.0 256.2 M0.0 215.6 5.1 221.7 M5.1 221.7 6.1 242.0 M6.1 242.0 0.0 246.1 M72.0 221.7 99.4 219.7 M99.4 219.7 105.5 229.8 M105.5 229.8 109.6 242.0 M109.6 242.0 89.3 252.2 M89.3 252.2 77.1 250.1 M77.1 250.1 69.0 242.0 M69.0 242.0 72.0 221.7 M116.7 211.6 129.8 209.6 M129.8 209.6 145.1 208.5 M145.1 208.5 145.1 229.8 M145.1 229.8 138.0 223.8 M138.0 223.8 116.7 223.8 M116.7 223.8 116.7 211.6 M107.5 189.3 131.9 175.1 M131.9 175.1 145.1 167.0 M145.1 167.0 145.1 207.5 M145.1 207.5 129.8 209.6 M129.8 209.6 116.7 211.6 M116.7 211.6 105.5 217.7 M105.5 217.7 107.5 189.3 M102.5 257.1 121.7 252.0 M121.7 252.0 145.1 250.0 M145.1 250.0 145.1 268.3 M145.1 268.3 131.9 275.4 M131.9 275.4 119.7 270.3 M119.7 270.3 109.6 264.2 M109.6 264.2 102.5 257.1 M24.3 266.2 38.5 256.1 M38.5 256.1 50.7 266.2 M50.7 266.2 60.9 284.5 M60.9 284.5 64.9 295.6 M64.9 295.6 50.7 300.7 M50.7 300.7 38.5 306.8 M38.5 306.8 30.4 314.9 M30.4 314.9 26.4 308.8 M26.4 308.8 23.3 290.6 M23.3 290.6 24.3 266.2 M0.0 264.2 6.1 260.1 M6.1 260.1 14.2 270.3 M14.2 270.3 24.3 266.2 M24.3 266.2 23.3 290.6 M23.3 290.6 26.4 308.8 M26.4 308.8 30.4 314.9 M30.4 314.9 17.2 333.2 M17.2 333.2 8.1 339.3 M8.1 339.3 3.0 341.3 M3.0 341.3 3.0 290.6 M3.0 290.6 0.0 288.5 M106.5 284.5 115.6 274.3 M115.6 274.3 131.9 275.4 M131.9 275.4 140.0 272.3 M140.0 272.3 142.0 280.4 M142.0 280.4 133.9 286.5 M133.9 286.5 131.9 298.7 M131.9 298.7 123.8 300.7 M123.8 300.7 119.7 290.6 M119.7 290.6 106.5 284.5 M0.0 347.4 3.0 349.4 M3.0 349.4 3.0 363.6 M3.0 363.6 0.0 364.6 M28.4 375.8 60.9 390.0 M60.9 390.0 69.0 410.1 M28.4 410.1 28.4 375.8 M194.8 528.8 224.2 528.8 M224.2 528.8 225.2 538.0 M225.2 538.0 218.1 543.0 M218.1 543.0 194.8 543.0 M194.8 543.0 194.8 528.8 M39.6 622.2 48.7 616.1 M48.7 616.1 81.2 621.2 M81.2 621.2 91.3 627.2 M91.3 627.2 103.5 637.4 M103.5 637.4 89.3 647.5 M89.3 647.5 87.2 661.7 M87.2 661.7 67.0 662.7 M67.0 662.7 69.0 678.0 M69.0 678.0 73.0 691.1 M73.0 691.1 60.9 700.1 M34.5 700.1 34.5 678.0 M34.5 678.0 50.7 661.7 M50.7 661.7 46.7 645.5 M46.7 645.5 42.6 631.3 M42.6 631.3 39.6 622.2 M0.0 610.0 12.2 619.1 M12.2 619.1 18.3 629.3 M18.3 629.3 20.3 653.6 M20.3 653.6 28.4 669.8 M28.4 669.8 31.4 682.0 M31.4 682.0 31.4 700.1 M0.0 716.5 33.5 716.5 M33.5 716.5 32.5 730.7 M32.5 730.7 26.4 747.0 M26.4 747.0 16.2 763.2 M16.2 763.2 10.1 775.4 M10.1 775.4 8.1 798.7 M43.6 680.0 42.6 714.5 M42.6 714.5 34.9 714.9 M34.9 714.9 32.5 700.3 M32.5 700.3 32.5 680.0 M46.7 716.5 54.8 717.5 M54.8 717.5 64.9 723.6 M64.9 723.6 60.9 740.9 M60.9 740.9 50.7 749.0 M50.7 749.0 40.6 744.9 M40.6 744.9 30.4 740.9 M30.4 740.9 33.5 728.7 M33.5 728.7 46.7 716.5 M16.2 763.2 26.4 747.0 M26.4 747.0 30.4 740.9 M30.4 740.9 40.6 744.9 M40.6 744.9 50.7 749.0 M50.7 749.0 60.9 740.9 M60.9 740.9 64.9 723.6 M64.9 723.6 75.1 728.7 M75.1 728.7 81.2 740.9 M81.2 740.9 85.2 749.0 M85.2 749.0 83.2 769.3 M83.2 769.3 79.1 781.4 M79.1 781.4 67.0 787.5 M67.0 787.5 67.0 798.7 M8.1 798.7 10.1 775.4 M10.1 775.4 16.2 763.2 M69.0 680.0 73.0 692.2 M73.0 692.2 60.9 706.4 M60.9 706.4 58.8 710.4 M58.8 710.4 64.9 723.6 M64.9 723.6 54.8 717.5 M54.8 717.5 46.7 716.5 M46.7 716.5 42.6 714.5 M42.6 714.5 43.6 680.0 M363.8 605.2 380.0 605.2 M380.0 605.2 386.1 609.3 M386.1 609.3 394.2 605.2 M394.2 605.2 408.4 607.2 M408.4 607.2 418.5 600.1 M418.5 600.1 426.7 605.2 M426.7 605.2 440.9 619.4 M440.9 619.4 408.4 616.4 M408.4 616.4 402.3 617.4 M402.3 617.4 394.2 633.6 M394.2 633.6 393.2 649.8 M393.2 649.8 378.0 652.9 M378.0 652.9 369.8 641.7 M369.8 641.7 358.7 635.6 M358.7 635.6 355.6 617.4 M355.6 617.4 363.8 605.2 M397.2 770.3 435.8 770.3 M435.8 770.3 435.8 790.6 M435.8 790.6 397.2 795.6 M397.2 795.6 397.2 770.3 M300.9 696.2 345.5 696.2 M345.5 696.2 346.5 706.4 M346.5 706.4 307.0 716.5 M307.0 716.5 300.9 696.2 M412.4 20.3 449.0 19.3 M449.0 19.3 446.9 36.5 M446.9 36.5 444.9 49.7 M444.9 49.7 455.1 53.8 M455.1 53.8 471.3 52.7 M471.3 52.7 480.0 48.0 M480.0 48.0 491.2 60.9 M491.2 60.9 504.3 64.9 M504.3 64.9 501.5 66.1 M501.5 66.1 485.0 77.8 M485.0 77.8 476.0 89.0 M476.0 89.0 464.8 102.5 M464.8 102.5 462.0 105.5 M392.2 105.5 396.2 85.2 M396.2 85.2 402.3 71.0 M402.3 71.0 414.5 67.0 M414.5 67.0 421.6 58.8 M421.6 58.8 417.5 47.7 M417.5 47.7 413.5 32.5 M413.5 32.5 412.4 20.3 M501.5 66.1 504.3 64.9 M504.3 64.9 511.4 60.9 M511.4 60.9 522.6 60.9 M522.6 60.9 523.6 71.0 M523.6 71.0 534.8 75.1 M534.8 75.1 540.9 91.3 M540.9 91.3 560.1 93.3 M560.1 93.3 563.2 105.5 M462.0 105.5 464.8 102.5 M464.8 102.5 476.0 89.0 M476.0 89.0 485.0 77.8 M485.0 77.8 501.5 66.1" fill="none" stroke="#a9a9a9" stroke-width="1" stroke-linejoin="round"/>
<path d="M690.0 384.0 700.0 390.0 706.0 386.0 715.0 392.0 M451.0 528.1 449.0 544.3 451.0 552.5 449.0 562.6 444.9 578.8 453.0 584.9 463.2 587.0 464.2 597.1 455.1 607.2 451.0 615.4 442.9 618.4 444.9 629.6 441.9 639.7 450.0 645.8 449.0 662.0 440.9 680.1 M439.8 680.0 442.9 688.1 437.8 698.3 440.9 702.3 455.1 699.3 467.2 701.3 469.3 710.4 467.2 724.6 473.3 736.8 480.0 747.0 M480.0 748.0 485.1 751.0 490.1 757.1 506.4 764.2 514.5 762.2 520.6 765.2 530.7 767.2 538.8 767.2 540.9 771.3 542.9 791.6 544.9 800.1" fill="none" stroke="#3a3a3a" stroke-width="1.1" stroke-linejoin="round"/>
<rect x="107" y="782.5" width="252" height="3" fill="#000"/>
<text x="236" y="777" font-family="Liberation Sans, sans-serif" font-size="12" text-anchor="middle" fill="#222">40 km</text>
<text x="233.5" y="721.3" font-family="Liberation Sans, sans-serif" font-size="7" font-weight="bold" text-anchor="middle" fill="#000">N</text>
<path d="M233.5 726.5 L235.6 741.4 L250 743.5 L235.6 745.6 L233.5 760.5 L231.4 745.6 L217 743.5 L231.4 741.4 Z M226.5 736.5 L233.5 741.5 L240.5 736.5 L235.5 743.5 L240.5 750.5 L233.5 745.5 L226.5 750.5 L231.5 743.5 Z" fill="#000"/>
<rect x="0" y="0" width="715" height="1" fill="#555"/>
<rect x="0" y="799" width="715" height="1" fill="#555"/>
</svg>
<div class="abs" style="left:714.3px;top:0;width:469px;height:800px;background:#737373;border-left:1.7px solid #4c4c4c"></div>
<div class="abs" style="left:721px;top:45px;width:461px;height:727px;background:#b3b3b3;border:1px solid #4d4d4d;border-radius:3px"></div>
<div class="abs" style="left:722.5px;top:162px;width:224.5px;height:19px;background:#efefef"></div>
<div class="abs" style="left:721px;top:777px;width:108px;height:24px;border:1px solid #4a4a4a;border-bottom:0;border-radius:2px 2px 0 0"></div>
<div class="abs" style="left:828px;top:772px;width:79px;height:29px;border:1px solid #4a4a4a;border-top:0;border-bottom:0"></div>
<div class="abs" style="left:906px;top:777px;width:147.5px;height:24px;border:1px solid #4a4a4a;border-left:0;border-bottom:0;border-radius:0 2px 0 0"></div>
<svg class="abs" style="left:0;top:0" width="1183" height="800" viewBox="0 0 1183 800"><rect x="728.5" y="25" width="9.5" height="9.5" fill="#f0f0ee" stroke="#fff" stroke-width="0.6"/><circle cx="738.2" cy="35" r="2.1" fill="#58b058" stroke="#d8f0d8" stroke-width="0.6"/><path d="M753 29.5 a5.3 5.3 0 0 1 9.6 -2 l1.5 -1.2 v4.5 h-4.6 l1.6 -1.5 a3.2 3.2 0 0 0 -5.8 0.9z" fill="#6593d0" stroke="#3f6cab" stroke-width="0.5"/><path d="M763.2 32.5 a5.3 5.3 0 0 1 -9.6 2 l-1.5 1.2 v-4.5 h4.6 l-1.6 1.5 a3.2 3.2 0 0 0 5.8 -0.9z" fill="#6593d0" stroke="#3f6cab" stroke-width="0.5"/><path d="M776 26.5 h11.5 l-4.6 5.2 v5.8 l-2.3 -1.2 v-4.6z" fill="#7fa6dc" stroke="#3a68aa" stroke-width="0.8"/><rect x="775.8" y="24.6" width="12" height="1.8" fill="#e9d54a"/><rect x="800" y="26" width="1.6" height="11" fill="#777"/><rect x="802.2" y="27" width="3" height="2" fill="#e9a24a"/><rect x="802.2" y="30.5" width="3" height="2" fill="#e9a24a"/><rect x="802.2" y="34" width="3" height="2" fill="#e9a24a"/><path d="M808.5 24.5 l3.6 4.5 h-2.3 v8 h-2.6 v-8 h-2.3z" fill="#6593d0" stroke="#3f6cab" stroke-width="0.5"/><circle cx="828.9" cy="31.3" r="5.5" fill="#4f8ee0" stroke="#3a72c0" stroke-width="0.6"/><text x="829.1" y="35" font-family="Liberation Serif, serif" font-size="10" font-weight="bold" font-style="italic" fill="#fff" text-anchor="middle">i</text><circle cx="1175.5" cy="7.5" r="4.7" fill="none" stroke="#3a3a3a" stroke-width="1"/><path d="M1173.2 5.2 l4.6 4.6 M1177.8 5.2 l-4.6 4.6" stroke="#3a3a3a" stroke-width="1.3"/><path d="M728.8 53.6 h6 l-3 5.5z" fill="#6b6b6b"/><path d="M750.9 50.5 L752.7 55.1 L757.6 55.3 L753.8 58.4 L755.0 63.2 L750.9 60.5 L746.8 63.2 L748.0 58.4 L744.2 55.3 L749.1 55.1Z" fill="#f8ef6c" stroke="#dcbc2c" stroke-width="1"/><path d="M746.9 72.1 v6 l5.5 -3z" fill="#6b6b6b"/><path d="M764.0 71.0 h5.2 l1.6 1.7 h3.9 v8.2 h-10.7z" fill="#e8e8e8" stroke="#f6f6f6" stroke-width="0.8" stroke-linejoin="round"/><path d="M746.9 91.1 v6 l5.5 -3z" fill="#6b6b6b"/><path d="M764.0 90.0 h5.2 l1.6 1.7 h3.9 v8.2 h-10.7z" fill="#e8e8e8" stroke="#f6f6f6" stroke-width="0.8" stroke-linejoin="round"/><path d="M746.9 110.2 v6 l5.5 -3z" fill="#6b6b6b"/><path d="M764.0 109.1 h5.2 l1.6 1.7 h3.9 v8.2 h-10.7z" fill="#e8e8e8" stroke="#f6f6f6" stroke-width="0.8" stroke-linejoin="round"/><path d="M746.9 129.3 v6 l5.5 -3z" fill="#6b6b6b"/><path d="M764.0 128.2 h5.2 l1.6 1.7 h3.9 v8.2 h-10.7z" fill="#e8e8e8" stroke="#f6f6f6" stroke-width="0.8" stroke-linejoin="round"/><path d="M728.8 148.9 h6 l-3 5.5z" fill="#6b6b6b"/><path d="M745.6 145.8 h10 v13 h-10z" fill="#e6e6e6" stroke="#cfcfcf" stroke-width="0.6"/><rect x="745.6" y="145.8" width="2.5" height="13" fill="#d0d0d0"/><path d="M751.6 145.8 h3 v5 l-1.5 -1.2 l-1.5 1.2z" fill="#4a74b4"/><path d="M764.0 166.3 h5.2 l1.6 1.7 h3.9 v8.2 h-10.7z" fill="#f4f4f4" stroke="#b9b9b9" stroke-width="0.8" stroke-linejoin="round"/><path d="M746.4 187.1 h6 l-3 5.5z" fill="#6b6b6b"/><path d="M764.0 185.4 h5.2 l1.6 1.7 h3.9 v8.2 h-10.7z" fill="#e8e8e8" stroke="#f6f6f6" stroke-width="0.8" stroke-linejoin="round"/><path d="M764.6 206.2 h6 l-3 5.5z" fill="#6b6b6b"/><path d="M782.2 204.5 h5.2 l1.6 1.7 h3.9 v8.2 h-10.7z" fill="#e8e8e8" stroke="#f6f6f6" stroke-width="0.8" stroke-linejoin="round"/><path d="M801.4 222.1 h7 v8.5 l-3.5 4 l-3.5 -4z" fill="#7aa3d6" stroke="#3a5f9a" stroke-width="0.9"/><rect x="803.1" y="223.6" width="1.6" height="7" fill="#c9dcf2"/><path d="M801.4 241.2 h7 v8.5 l-3.5 4 l-3.5 -4z" fill="#7aa3d6" stroke="#3a5f9a" stroke-width="0.9"/><rect x="803.1" y="242.7" width="1.6" height="7" fill="#c9dcf2"/><path d="M765.1 262.8 v6 l5.5 -3z" fill="#6b6b6b"/><path d="M782.2 261.7 h5.2 l1.6 1.7 h3.9 v8.2 h-10.7z" fill="#e8e8e8" stroke="#f6f6f6" stroke-width="0.8" stroke-linejoin="round"/><path d="M764.6 282.4 h6 l-3 5.5z" fill="#6b6b6b"/><path d="M782.2 280.7 h5.2 l1.6 1.7 h3.9 v8.2 h-10.7z" fill="#e8e8e8" stroke="#f6f6f6" stroke-width="0.8" stroke-linejoin="round"/><path d="M801.4 298.4 h7 v8.5 l-3.5 4 l-3.5 -4z" fill="#7aa3d6" stroke="#3a5f9a" stroke-width="0.9"/><rect x="803.1" y="299.9" width="1.6" height="7" fill="#c9dcf2"/><path d="M801.4 317.5 h7 v8.5 l-3.5 4 l-3.5 -4z" fill="#7aa3d6" stroke="#3a5f9a" stroke-width="0.9"/><rect x="803.1" y="319.0" width="1.6" height="7" fill="#c9dcf2"/><path d="M729.3 339.1 v6 l5.5 -3z" fill="#6b6b6b"/><rect x="745.1" y="337.9" width="11.6" height="10.4" fill="#c2e35c" stroke="#a9d040" stroke-width="0.6"/><path d="M745.5 338.6 l5.5 5.5 l2.5 -1 l3.3 4.6" fill="none" stroke="#eef6b8" stroke-width="1.1"/><path d="M751.1 339.8 l2.6 -1.4 l2.2 1.6 l-1 2.8 l-2.6 0.2z" fill="#178a17"/><path d="M729.3 358.1 v6 l5.5 -3z" fill="#6b6b6b"/><rect x="745.2" y="356.9" width="11.4" height="10.2" fill="#f6f6f6" stroke="#fff" stroke-width="0.5"/><path d="M747.1 362.8 l3.8 -3.6 l3.8 3.6 l-1 0 v3.2 h-5.6 v-3.2z" fill="none" stroke="#222" stroke-width="1"/><path d="M729.3 377.2 v6 l5.5 -3z" fill="#6b6b6b"/><path d="M745.3 376.1 h5.2 l1.6 1.7 h3.9 v8.2 h-10.7z" fill="#e8e8e8" stroke="#f6f6f6" stroke-width="0.8" stroke-linejoin="round"/><path d="M729.3 396.3 v6 l5.5 -3z" fill="#6b6b6b"/><path d="M743.5 397.8 l7 -3 l7 3 v6 l-7 3.5 l-7 -3.5z" fill="#e8c62e" stroke="#a8860a" stroke-width="0.8"/><path d="M743.5 397.8 l7 3 l7 -3 M750.5 400.8 v6.5" fill="none" stroke="#a8860a" stroke-width="0.7"/><ellipse cx="750.5" cy="396.3" rx="4.5" ry="3.3" fill="#6c9bd8" stroke="#dfe9f7" stroke-width="0.8"/><path d="M729.3 415.3 v6 l5.5 -3z" fill="#6b6b6b"/><path d="M743.5 425.8 C745.5 418.8 749.5 413.8 757.5 411.8 C756.5 417.8 751.5 421.8 746.0 422.8Z" fill="#a9c6ea" stroke="#3f6fb0" stroke-width="0.9"/><path d="M729.3 434.4 v6 l5.5 -3z" fill="#6b6b6b"/><path d="M744.5 432.9 q6 -3 12 0 q1.5 4 -1 7 q0 3 -2 4.5 h-2 q-1 -2 -1 -4 q-5 0 -6 -3.5z" fill="#5b8fd0" stroke="#2f5fa0" stroke-width="0.8"/><circle cx="748.5" cy="435.9" r="0.9" fill="#e8f0fb"/><circle cx="752.5" cy="435.9" r="0.9" fill="#e8f0fb"/><path d="M743.5 451.0 q9 1 14 6 q-6 1 -13 6.5 q4 -6.5 -1 -12.5z" fill="#6a9ad6" stroke="#3767a8" stroke-width="0.8"/><path d="M747.5 453.0 q3 4 0 8 M751.5 454.5 q2 2.5 0 5" stroke="#dbe7f6" stroke-width="0.8" fill="none"/><rect x="743.5" y="469.0" width="14" height="14" rx="2" fill="#5b95d8"/><text x="750.5" y="478.3" font-family="Liberation Sans, sans-serif" font-size="6" font-weight="bold" fill="#eef4fc" text-anchor="middle">DB2</text><path d="M729.3 491.6 v6 l5.5 -3z" fill="#6b6b6b"/><circle cx="750.5" cy="495.1" r="6.6" fill="#5b8ccc" stroke="#d5e2f4" stroke-width="0.9"/><path d="M745.7 493.6 q1.5 -3.5 4.6 -3 q0.5 2 -1.6 3 q0.6 2.4 -1.4 2.6 q-1.4 -0.4 -1.6 -2.6z M751.1 492.7 q2.6 -2.2 4.6 0.6 q0.6 3.4 -2 5.4 q-0.6 -2.4 -1.8 -3 q-1 -1.4 -0.8 -3z M748.1 497.1 l2.2 0.6 l-0.6 3 q-1.6 -1.2 -1.6 -3.6z" fill="#eef4fc"/><path d="M729.3 510.7 v6 l5.5 -3z" fill="#6b6b6b"/><circle cx="750.5" cy="514.2" r="6.6" fill="#5b8ccc" stroke="#d5e2f4" stroke-width="0.9"/><path d="M745.7 512.7 q1.5 -3.5 4.6 -3 q0.5 2 -1.6 3 q0.6 2.4 -1.4 2.6 q-1.4 -0.4 -1.6 -2.6z M751.1 511.8 q2.6 -2.2 4.6 0.6 q0.6 3.4 -2 5.4 q-0.6 -2.4 -1.8 -3 q-1 -1.4 -0.8 -3z M748.1 516.2 l2.2 0.6 l-0.6 3 q-1.6 -1.2 -1.6 -3.6z" fill="#eef4fc"/><circle cx="750.5" cy="533.2" r="6.4" fill="#3e6fb4" stroke="#2a4f8a" stroke-width="0.8"/><path d="M746.5 530.2 h8 v2 h-8z M745.5 534.5 h10 v2 h-10z" fill="#e6eefa"/><circle cx="750.5" cy="533.2" r="1.8" fill="#e6eefa"/><path d="M729.3 548.8 v6 l5.5 -3z" fill="#6b6b6b"/><circle cx="750.5" cy="552.3" r="6.4" fill="#b9cde8" stroke="#5f8cc6" stroke-width="0.9"/><path d="M747.0 549.8 l3 6 l4 -7" fill="none" stroke="#3d6cae" stroke-width="1.1"/><path d="M729.3 567.9 v6 l5.5 -3z" fill="#6b6b6b"/><circle cx="750.5" cy="571.4" r="6.4" fill="#b4c8e4" stroke="#6f99d0" stroke-width="0.9"/><path d="M744.3 571.4 h12.4 M745.5 568.2 h10 M745.5 574.6 h10 M750.5 565.2 v12.4" stroke="#86a9d8" stroke-width="0.55" fill="none"/><ellipse cx="750.5" cy="571.4" rx="3.2" ry="6.2" fill="none" stroke="#86a9d8" stroke-width="0.55"/><path d="M729.3 587.0 v6 l5.5 -3z" fill="#6b6b6b"/><circle cx="750.5" cy="590.5" r="6.6" fill="#5b8ccc" stroke="#d5e2f4" stroke-width="0.9"/><path d="M745.7 589.0 q1.5 -3.5 4.6 -3 q0.5 2 -1.6 3 q0.6 2.4 -1.4 2.6 q-1.4 -0.4 -1.6 -2.6z M751.1 588.1 q2.6 -2.2 4.6 0.6 q0.6 3.4 -2 5.4 q-0.6 -2.4 -1.8 -3 q-1 -1.4 -0.8 -3z M748.1 592.5 l2.2 0.6 l-0.6 3 q-1.6 -1.2 -1.6 -3.6z" fill="#eef4fc"/><path d="M729.3 606.0 v6 l5.5 -3z" fill="#6b6b6b"/><circle cx="750.5" cy="609.5" r="6.6" fill="#94b3dc" stroke="#d5e2f4" stroke-width="0.9"/><path d="M745.7 608.0 q1.5 -3.5 4.6 -3 q0.5 2 -1.6 3 q0.6 2.4 -1.4 2.6 q-1.4 -0.4 -1.6 -2.6z M751.1 607.1 q2.6 -2.2 4.6 0.6 q0.6 3.4 -2 5.4 q-0.6 -2.4 -1.8 -3 q-1 -1.4 -0.8 -3z M748.1 611.5 l2.2 0.6 l-0.6 3 q-1.6 -1.2 -1.6 -3.6z" fill="#eef4fc"/><path d="M729.3 625.1 v6 l5.5 -3z" fill="#6b6b6b"/><path d="M750.5 622.3 L750.5 634.9 M756.0 625.5 L745.0 631.8 M756.0 631.8 L745.0 625.5 " stroke="#5b8dc8" stroke-width="2.4" stroke-linecap="round" fill="none"/></svg>
<div class="abs" style="left:145px;top:105px;width:545px;height:423.3px;background:#737373;border-radius:7px 7px 0 0;box-shadow:0 5px 14px rgba(0,0,0,.40),0 0 3px rgba(0,0,0,.3)"></div>
<div class="abs" style="left:145px;top:105px;width:545px;height:33.5px;background:#2c2a2a;border-radius:7px 7px 0 0"></div>
<div class="inp" style="left:213px;top:149.1px;width:467.0px;height:24.4px;"></div>
<div class="cmb" style="left:213px;top:179.2px;width:467.0px;height:24.0px;"></div>
<div class="inp" style="left:359.5px;top:236.1px;width:152.0px;height:24.9px;"></div>
<div class="inp" style="left:200.5px;top:266.1px;width:153.0px;height:24.9px;"></div>
<div class="inp" style="left:517.5px;top:266.1px;width:153.0px;height:24.9px;"></div>
<div class="inp" style="left:359.5px;top:296.1px;width:152.0px;height:24.9px;"></div>
<div class="btn" style="left:202.1px;top:334.1px;width:146.5px;height:26.3px;"></div>
<div class="btn" style="left:384.8px;top:334.1px;width:135.8px;height:26.3px;"></div>
<div class="btn" style="left:556.4px;top:334.1px;width:106.2px;height:26.3px;"></div>
<div class="cmb" style="left:213px;top:382.7px;width:438.5px;height:25.0px;"></div>
<div class="btn" style="left:657px;top:384px;width:23.0px;height:23.0px;border-radius:4px;"></div>
<div class="cmb" style="left:213px;top:412.7px;width:467.0px;height:25.0px;"></div>
<div class="btn" style="left:155px;top:492px;width:56.8px;height:26.6px;"></div>
<div class="btn" style="left:549.2px;top:492px;width:68.5px;height:26.6px;"></div>
<div class="btn" style="left:624px;top:492px;width:56.0px;height:26.6px;"></div>
<svg class="abs" style="left:0;top:0" width="1183" height="800" viewBox="0 0 1183 800"><circle cx="673.4" cy="121.7" r="8.4" fill="#e9541f"/><path d="M670.2 118.5 l6.4 6.4 M676.6 118.5 l-6.4 6.4" stroke="#fff" stroke-width="1.6" stroke-linecap="round"/><path d="M669.6999999999999 189.5 h5.2 l-2.6 4.6z" fill="#c8c8c8"/><path d="M641.6999999999999 393.6 h5.2 l-2.6 4.6z" fill="#c8c8c8"/><path d="M669.6999999999999 423.6 h5.2 l-2.6 4.6z" fill="#c8c8c8"/><path d="M158.3 215.5 h9 l-4.5 6.5z" fill="none" stroke="#222" stroke-width="1.3" stroke-linejoin="round"/><path d="M338.9 352 h6.6 l-3.3 3.3z" fill="#2e2e2e"/><circle cx="166.7" cy="505.3" r="6.3" fill="#3f9be8" stroke="#2b7ac6" stroke-width="0.7"/><text x="166.8" y="509.3" font-family="Liberation Sans, sans-serif" font-size="11" font-weight="bold" fill="#fff" text-anchor="middle">?</text><path d="M557 501 l8.5 8.5 M565.5 501 l-8.5 8.5" stroke="#5a5a5a" stroke-width="3.2" stroke-linecap="round"/><rect x="629.8" y="498.3" width="10.6" height="13" rx="1" fill="#f4f6f8" stroke="#c9d2dc" stroke-width="0.7"/><path d="M635.5 502 h3.5 M635.5 504 h3.5 M631.5 506.3 h7.5 M631.5 508.3 h7.5" stroke="#7fa0c8" stroke-width="0.8"/><text x="633.3" y="504.6" font-family="Liberation Sans, sans-serif" font-size="5" font-weight="bold" fill="#3a68aa" text-anchor="middle">A</text><path d="M662.4 395.4 a5.9 5.9 0 0 1 11.8 0z" fill="#9a9a9a" stroke="#c9ccd2" stroke-width="0.8" stroke-dasharray="1.4 1"/><path d="M668.3 389.6 v5.8 M664.4 392 q3.9 -2.2 7.8 0" stroke="#c9ccd2" stroke-width="0.7" fill="none"/><path d="M662.4 395.4 h11.8 a5.9 5.9 0 0 1 -11.8 0z" fill="#8fbaf0" stroke="#dbe8f8" stroke-width="0.7"/><path d="M668.3 395.4 v5.8 M664 398.6 h8.6" stroke="#dbe8f8" stroke-width="0.7"/><circle cx="672.8" cy="399.4" r="3.5" fill="#dcb522"/><path d="M670.9 401.4 l3.9 -4" stroke="#fbf0a0" stroke-width="1.5" stroke-linecap="round"/></svg>
<div id="txt" style="position:absolute;left:0;top:0;width:1183px;height:800px;will-change:transform;transform:translateZ(0)"><span class="t" style="left:364.7px;top:111.6px;transform:scaleX(0.9183);transform-origin:0 0;color:#fff;font-weight:bold;">Bookmark Editor</span><span class="t" style="left:154.7px;top:151.0px;transform:scaleX(0.9368);transform-origin:0 0;color:#111;">Name</span><span class="t" style="left:154.7px;top:181.0px;transform:scaleX(0.9429);transform-origin:0 0;color:#111;">Group</span><span class="t" style="left:217.6px;top:151.0px;letter-spacing:-0.029px;color:#111;">New bookmark addition UI</span><span class="t" style="left:174.8px;top:208.0px;transform:scaleX(0.9202);transform-origin:0 0;color:#111;font-weight:bold;">Extent (current: map view)</span><span class="t" style="left:318.9px;top:238.4px;letter-spacing:-0.167px;color:#111;">North</span><span class="t" style="left:364.5px;top:238.4px;transform:scaleX(0.8476);transform-origin:0 0;color:#111;">1358220.6975</span><span class="t" style="left:164.7px;top:268.4px;transform:scaleX(0.9197);transform-origin:0 0;color:#111;">West</span><span class="t" style="left:204.7px;top:268.4px;transform:scaleX(0.8757);transform-origin:0 0;color:#111;">486441.0748</span><span class="t" style="left:486.3px;top:268.4px;transform:scaleX(0.8781);transform-origin:0 0;color:#111;">East</span><span class="t" style="left:521.8px;top:268.4px;transform:scaleX(0.8439);transform-origin:0 0;color:#111;">638563.2121</span><span class="t" style="left:317.3px;top:298.4px;letter-spacing:-0.319px;color:#111;">South</span><span class="t" style="left:364.5px;top:298.4px;transform:scaleX(0.8275);transform-origin:0 0;color:#111;">1231955.0142</span><span class="t" style="left:206.5px;top:337.4px;letter-spacing:-0.184px;color:#111;">Calculate from Layer</span><span class="t" style="left:394.9px;top:337.4px;transform:scaleX(0.9388);transform-origin:0 0;color:#111;">Map Canvas Extent</span><span class="t" style="left:561.1px;top:337.4px;transform:scaleX(0.9237);transform-origin:0 0;color:#111;">Draw on Canvas</span><span class="t" style="left:155.0px;top:385.4px;transform:scaleX(0.7543);transform-origin:0 0;color:#111;">CRS</span><span class="t" style="left:217.4px;top:385.4px;transform:scaleX(0.9225);transform-origin:0 0;color:#d0d0d0;">EPSG:3148 - Indian 1960 / UTM zone 48N</span><span class="t" style="left:155.0px;top:415.4px;transform:scaleX(0.9305);transform-origin:0 0;color:#111;">Saved in</span><span class="t" style="left:217.4px;top:415.4px;letter-spacing:-0.291px;color:#d0d0d0;">User Bookmarks</span><span class="t" style="left:177.8px;top:495.4px;letter-spacing:-0.349px;color:#111;">Help</span><span class="t" style="left:571.8px;top:495.4px;transform:scaleX(0.9015);transform-origin:0 0;color:#111;"><u>C</u>ancel</span><span class="t" style="left:645.8px;top:495.4px;transform:scaleX(0.8740);transform-origin:0 0;color:#111;"><u>S</u>ave</span><span class="t" style="left:915.3px;top:-1.0px;letter-spacing:-0.366px;color:#111;">Browser</span><span class="t" style="left:763.5px;top:46.6px;transform:scaleX(0.9413);transform-origin:0 0;color:#111;">Favorites</span><span class="t" style="left:781.2px;top:65.7px;transform:scaleX(0.7960);transform-origin:0 0;color:#111;">.GIS</span><span class="t" style="left:781.2px;top:84.7px;transform:scaleX(0.8936);transform-origin:0 0;color:#111;">.GIS: Math</span><span class="t" style="left:781.2px;top:103.8px;transform:scaleX(0.9353);transform-origin:0 0;color:#111;">.GIS: Satellites</span><span class="t" style="left:781.2px;top:122.9px;letter-spacing:-0.294px;color:#111;">Desktop</span><span class="t" style="left:762.9px;top:141.9px;letter-spacing:-0.125px;color:#111;">Spatial Bookmarks</span><span class="t" style="left:781.2px;top:161.0px;letter-spacing:-0.146px;color:#111;">Project Bookmarks</span><span class="t" style="left:781.2px;top:180.1px;letter-spacing:-0.262px;color:#111;">User Bookmarks</span><span class="t" style="left:799.4px;top:199.2px;transform:scaleX(0.9177);transform-origin:0 0;color:#111;">Africa - DRC</span><span class="t" style="left:817.7px;top:218.2px;letter-spacing:-0.164px;color:#111;">Nord K., frontiere 2</span><span class="t" style="left:817.7px;top:237.3px;letter-spacing:-0.161px;color:#111;">Sud K, frontiere</span><span class="t" style="left:799.4px;top:256.4px;letter-spacing:-0.366px;color:#111;">Cambodia</span><span class="t" style="left:799.4px;top:275.4px;letter-spacing:-0.250px;color:#111;">Southeast Asia</span><span class="t" style="left:817.7px;top:294.5px;letter-spacing:0.003px;color:#111;">beng per: northwest</span><span class="t" style="left:817.7px;top:313.6px;letter-spacing:-0.088px;color:#111;">beng per: southeast</span><span class="t" style="left:763.5px;top:332.7px;letter-spacing:-0.268px;color:#111;">Project Home</span><span class="t" style="left:763.5px;top:351.7px;transform:scaleX(0.9342);transform-origin:0 0;color:#111;">Home</span><span class="t" style="left:764.1px;top:370.8px;letter-spacing:0.609px;color:#111;">/</span><span class="t" style="left:763.5px;top:389.9px;transform:scaleX(0.8906);transform-origin:0 0;color:#111;">GeoPackage</span><span class="t" style="left:763.5px;top:408.9px;letter-spacing:-0.198px;color:#111;">SpatiaLite</span><span class="t" style="left:763.5px;top:428.0px;transform:scaleX(0.8765);transform-origin:0 0;color:#111;">PostGIS</span><span class="t" style="left:763.5px;top:447.1px;transform:scaleX(0.8079);transform-origin:0 0;color:#111;">MSSQL</span><span class="t" style="left:763.5px;top:466.1px;transform:scaleX(0.8188);transform-origin:0 0;color:#111;">DB2</span><span class="t" style="left:763.5px;top:485.2px;transform:scaleX(0.8779);transform-origin:0 0;color:#111;">WMS/WMTS</span><span class="t" style="left:763.5px;top:504.3px;transform:scaleX(0.8814);transform-origin:0 0;color:#111;">XYZ Tiles</span><span class="t" style="left:763.5px;top:523.4px;transform:scaleX(0.7713);transform-origin:0 0;color:#111;">WCS</span><span class="t" style="left:763.5px;top:542.4px;transform:scaleX(0.9057);transform-origin:0 0;color:#111;">WFS / OGC API - Features</span><span class="t" style="left:763.5px;top:561.5px;transform:scaleX(0.8011);transform-origin:0 0;color:#111;">OWS</span><span class="t" style="left:763.5px;top:580.6px;transform:scaleX(0.9261);transform-origin:0 0;color:#111;">ArcGisMapServer</span><span class="t" style="left:763.5px;top:599.6px;transform:scaleX(0.9294);transform-origin:0 0;color:#111;">ArcGisFeatureServer</span><span class="t" style="left:763.5px;top:618.7px;transform:scaleX(0.9276);transform-origin:0 0;color:#111;">GeoNode</span><span class="t" style="left:735.2px;top:778.4px;letter-spacing:-0.218px;color:#111;">Layer Styling</span><span class="t" style="left:842.5px;top:775.9px;letter-spacing:-0.351px;color:#111;">Browser</span><span class="t" style="left:921.0px;top:778.4px;letter-spacing:-0.220px;color:#111;">Processing Toolbox</span></div>
</body></html>
